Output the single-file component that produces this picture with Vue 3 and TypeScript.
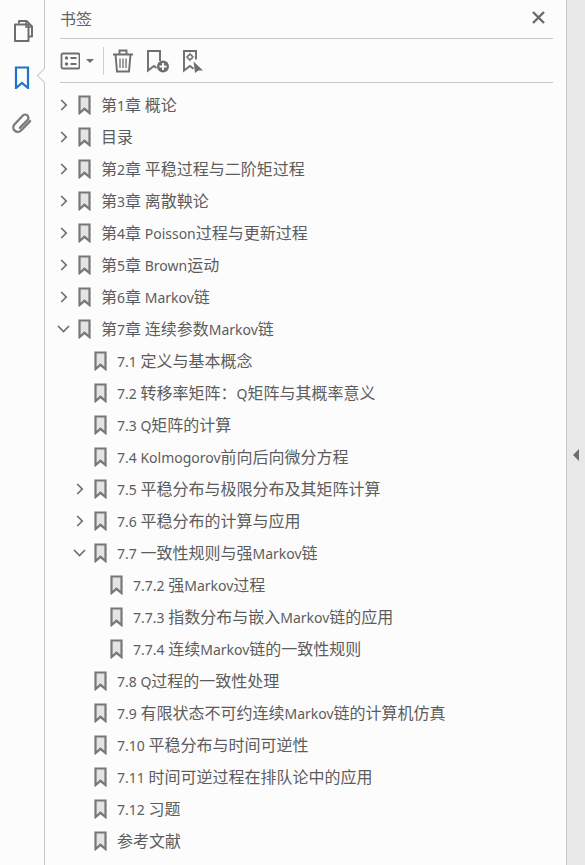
<template>
  <div class="viewer">
    <nav class="rail">
      <button class="rail-btn">
        <svg width="22" height="24" viewBox="0 0 22 24" fill="none" stroke="#6e6e6e" stroke-width="2">
          <path d="M8 4.500V2h7.500L21 7.500V17.500h-3.500" stroke-linejoin="round" />
          <path d="M15 2.500V8h5.500" stroke-width="1.500" />
          <path d="M4 5.500h13.500V22H4z" stroke-linejoin="round" />
        </svg>
      </button>
      <button class="rail-btn active">
        <svg width="16" height="24" viewBox="0 0 16 24" fill="none" stroke="#1f73c9" stroke-width="2.200">
          <path d="M2 2.500h12V23l-6-5-6 5z" />
        </svg>
      </button>
      <button class="rail-btn">
        <svg width="22" height="24" viewBox="0 0 22 24" fill="none" stroke="#7a7a7a" stroke-width="2.300" stroke-linecap="round">
          <path d="M15.500 5V18a4.500 4.500 0 0 1-9 0V6a3.200 3.200 0 0 1 6.400 0V17" transform="rotate(44 11 12)" />
        </svg>
      </button>
      <span class="rail-notch"></span>
    </nav>

    <section class="panel">
      <header class="panel-head">
        <span class="panel-title">书签</span>
        <svg class="close" width="13" height="13" viewBox="0 0 13 13" stroke="#6a6a6a" stroke-width="2.400">
          <path d="M1 1l11 11M12 1 1 12" />
        </svg>
      </header>

      <div class="toolbar">
        <button class="tool tool-menu">
          <svg width="20" height="18" viewBox="0 0 20 18" fill="none" stroke="#6e6e6e" stroke-width="1.800">
            <rect x="1.500" y="1.500" width="18" height="15" rx="1.500" />
            <circle cx="6.500" cy="6" r="1.700" fill="#6e6e6e" stroke="none" />
            <circle cx="6.500" cy="12" r="1.700" fill="#6e6e6e" stroke="none" />
            <path d="M10.500 6h6M10.500 12h6" />
          </svg>
          <span class="caret"></span>
        </button>
        <span class="divider"></span>
        <button class="tool">
          <svg width="22" height="24" viewBox="0 0 22 24" fill="none" stroke="#6e6e6e" stroke-width="1.900">
            <path d="M1 5.500h20M7.500 5V1.500h7V5M3.500 5.500l1.500 17h12l1.500-17" />
            <path d="M8 9.500v9.500M11 9.500v9.500M14 9.500v9.500" stroke-width="1.300" />
          </svg>
        </button>
        <button class="tool">
          <svg width="24" height="24" viewBox="0 0 24 24" fill="none" stroke="#6e6e6e" stroke-width="1.900">
            <path d="M14 12V2H2v19.500l6-4.500 2.500 1.900" />
            <circle cx="17" cy="17.500" r="6" fill="#6e6e6e" stroke="none" />
            <path d="M13.500 17.500h7M17 14v7" stroke="#fcfcfc" stroke-width="1.900" />
          </svg>
        </button>
        <button class="tool">
          <svg width="24" height="24" viewBox="0 0 24 24" fill="none" stroke="#6e6e6e" stroke-width="1.900">
            <path d="M14 10.500V2H2v19.500l6-4.500 3.500 2.700" />
            <circle cx="8" cy="8" r="2.300" stroke-width="1.400" />
            <path d="M8 3.800v1.400M8 10.800v1.400M3.800 8h1.400M10.800 8h1.400" stroke-width="1.200" />
            <path d="M11.500 12.500l9.500 9h-4.500l-3.500 2.500z" fill="#6e6e6e" stroke="none" />
          </svg>
        </button>
      </div>

      <ul class="tree">
        <li v-for="row in rows" :key="row.label" class="row" :class="`depth-${row.depth}`">
          <span class="chevron-slot">
            <svg v-if="row.chevron === 'right'" width="8" height="12" viewBox="0 0 8 12" fill="none" stroke="#6e6e6e" stroke-width="1.700">
              <path d="M1.200 1 6.200 6l-5 5" />
            </svg>
            <svg v-else-if="row.chevron === 'down'" width="13" height="8" viewBox="0 0 13 8" fill="none" stroke="#6e6e6e" stroke-width="1.700">
              <path d="M1 1l5.500 5.500L12 1" />
            </svg>
          </span>
          <svg class="mark" width="13" height="20" viewBox="0 0 13 20" fill="#e4e4e4" stroke="#787878" stroke-width="2.200">
            <path d="M1.500 1.500h10v16.500l-5-4.200-5 4.200z" />
          </svg>
          <span class="label">
            <span v-for="(part, i) in splitRuns(row.label)" :key="i" :class="{ latin: isLatin(part) }">{{ part }}</span>
          </span>
        </li>
      </ul>
    </section>

    <aside class="gutter">
      <span class="gutter-arrow"></span>
    </aside>
  </div>
</template>

<script setup lang="ts">
interface Row {
  label: string
  depth: number
  chevron?: 'right' | 'down'
}

const rows: Row[] = [
  { label: '第1章 概论', depth: 0, chevron: 'right' },
  { label: '目录', depth: 0, chevron: 'right' },
  { label: '第2章 平稳过程与二阶矩过程', depth: 0, chevron: 'right' },
  { label: '第3章 离散鞅论', depth: 0, chevron: 'right' },
  { label: '第4章 Poisson过程与更新过程', depth: 0, chevron: 'right' },
  { label: '第5章 Brown运动', depth: 0, chevron: 'right' },
  { label: '第6章 Markov链', depth: 0, chevron: 'right' },
  { label: '第7章 连续参数Markov链', depth: 0, chevron: 'down' },
  { label: '7.1 定义与基本概念', depth: 1 },
  { label: '7.2 转移率矩阵：Q矩阵与其概率意义', depth: 1 },
  { label: '7.3 Q矩阵的计算', depth: 1 },
  { label: '7.4 Kolmogorov前向后向微分方程', depth: 1 },
  { label: '7.5 平稳分布与极限分布及其矩阵计算', depth: 1, chevron: 'right' },
  { label: '7.6 平稳分布的计算与应用', depth: 1, chevron: 'right' },
  { label: '7.7 一致性规则与强Markov链', depth: 1, chevron: 'down' },
  { label: '7.7.2 强Markov过程', depth: 2 },
  { label: '7.7.3 指数分布与嵌入Markov链的应用', depth: 2 },
  { label: '7.7.4 连续Markov链的一致性规则', depth: 2 },
  { label: '7.8 Q过程的一致性处理', depth: 1 },
  { label: '7.9 有限状态不可约连续Markov链的计算机仿真', depth: 1 },
  { label: '7.10 平稳分布与时间可逆性', depth: 1 },
  { label: '7.11 时间可逆过程在排队论中的应用', depth: 1 },
  { label: '7.12 习题', depth: 1 },
  { label: '参考文献', depth: 1 },
]

// latin runs are set smaller than the CJK ones
const splitRuns = (text: string) => text.split(/([\x20-\x7e]+)/).filter(Boolean)
const isLatin = (text: string) => /^[\x20-\x7e]+$/.test(text)
</script>

<style>
html,
body {
  margin: 0;
  overflow: hidden;
}
</style>

<style scoped>
.viewer {
  display: flex;
  width: 585px;
  height: 865px;
  overflow: hidden;
  background: #fcfcfc;
  color: #5c5c5c;
  font-family: "Noto Sans", "Noto Sans CJK SC", sans-serif;
}

button {
  padding: 0;
  border: 0;
  background: none;
  display: flex;
  align-items: center;
  justify-content: center;
}

.rail {
  position: relative;
  flex: none;
  width: 44px;
  border-right: 1px solid #c8c8c8;
  display: flex;
  flex-direction: column;
  align-items: center;
  padding-top: 19px;
  gap: 22px;
  height: 846px;
}

.rail-btn {
  width: 44px;
  height: 24px;
}

.rail-notch {
  position: absolute;
  top: 70px;
  left: 39px;
  box-sizing: border-box;
  width: 11px;
  height: 11px;
  background: #fcfcfc;
  border-left: 1px solid #c8c8c8;
  border-bottom: 1px solid #c8c8c8;
  transform: rotate(45deg);
}

.panel {
  flex: none;
  width: 521px;
  border-right: 1px solid #c8c8c8;
}

.panel-head {
  height: 38px;
  margin: 0 13px 0 15px;
  border-bottom: 1px solid #c8c8c8;
  display: flex;
  align-items: center;
  justify-content: space-between;
  padding-right: 8px;
}

.panel-title {
  font-size: 16px;
  margin-top: -3px;
  color: #646464;
}

.close {
  margin-top: -3px;
}

.toolbar {
  height: 43px;
  margin: 0 13px 0 15px;
  border-bottom: 1px solid #c8c8c8;
  display: flex;
  align-items: center;
  gap: 12px;
}

.tool {
  height: 24px;
}

.tool-menu {
  gap: 6px;
}

.caret {
  width: 0;
  height: 0;
  border: 4px solid transparent;
  border-top: 4px solid #6e6e6e;
  border-bottom: 0;
}

.divider {
  width: 1px;
  height: 28px;
  margin-left: -3px;
  margin-right: -4px;
  background: #d0d0d0;
}

.tree {
  list-style: none;
  margin: 6px 0 0;
  padding: 0;
}

.row {
  height: 32px;
  display: flex;
  align-items: center;
  font-size: 16px;
  white-space: pre;
}

.depth-0 {
  padding-left: 11px;
}

.depth-1 {
  padding-left: 27px;
}

.depth-2 {
  padding-left: 43px;
}

.chevron-slot {
  width: 22px;
  flex: none;
  display: flex;
  align-items: center;
  justify-content: center;
  padding-right: 7px;
  box-sizing: border-box;
}

.mark {
  flex: none;
  margin-right: 10px;
}

.label {
  padding-bottom: 2px;
}

.latin {
  font-size: 14px;
}

.gutter {
  position: relative;
  flex: 1;
  background: #e8e8e8;
}

.gutter-arrow {
  position: absolute;
  top: 449px;
  left: 6px;
  width: 0;
  height: 0;
  border-top: 6px solid transparent;
  border-bottom: 6px solid transparent;
  border-right: 6px solid #6e6e6e;
}
</style>
